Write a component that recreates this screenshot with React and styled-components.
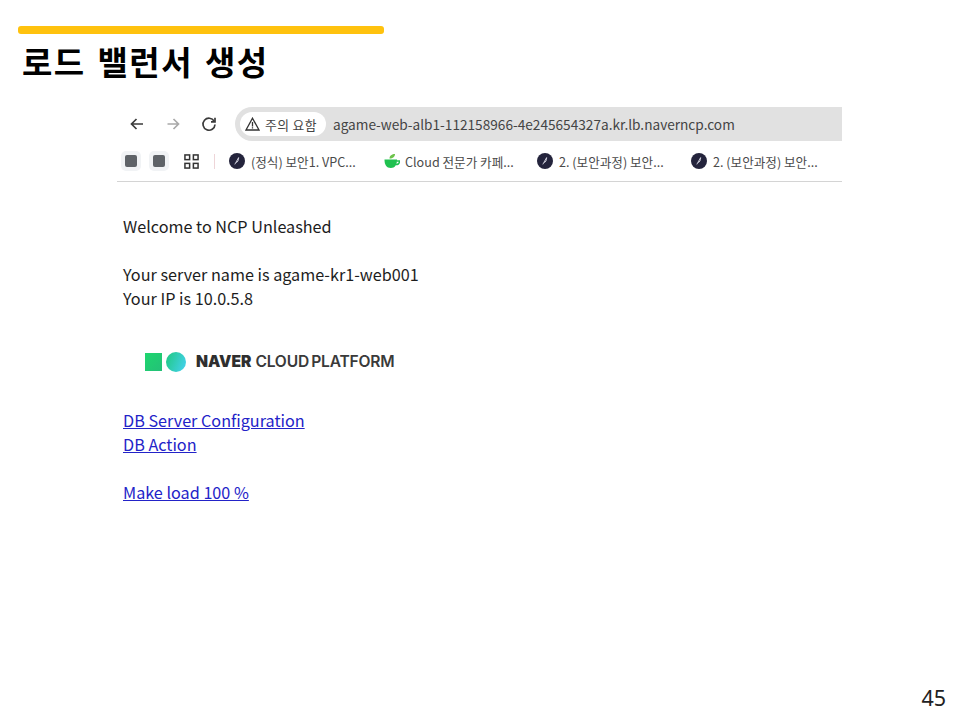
import React from "react";
import styled, { createGlobalStyle } from "styled-components";

const GlobalStyle = createGlobalStyle`
  html, body {
    margin: 0;
    padding: 0;
    background: #fff;
  }
  body {
    font-family: "Noto Sans CJK KR", "Noto Sans", sans-serif;
  }
`;

const Slide = styled.div`
  width: 960px;
  height: 720px;
  box-sizing: border-box;
  padding: 26px 14px 8px 18px;
  display: flex;
  flex-direction: column;
  overflow: hidden;
`;

const AccentBar = styled.div`
  width: 366px;
  height: 8px;
  border-radius: 3px;
  background: #ffc20e;
`;

const Title = styled.h1`
  margin: 3px 0 0 4px;
  font-size: 33px;
  line-height: 48px;
  font-weight: 700;
  letter-spacing: 1.45px;
  word-spacing: 3px;
  color: #000;
`;

const Shot = styled.div`
  width: 725px;
  margin: 22px 0 0 99px;
`;

const Toolbar = styled.div`
  height: 34px;
  display: flex;
  align-items: center;
`;

const NavButtons = styled.div`
  width: 118px;
  padding-left: 11px;
  box-sizing: border-box;
  display: flex;
  align-items: center;
  gap: 18px;
`;

const NavIcon = styled.svg`
  width: 18px;
  height: 18px;
  fill: none;
  stroke: ${(p) => (p.$muted ? "#a9a9a9" : "#3b3b3b")};
  stroke-width: 1.7;
`;

const Omnibox = styled.div`
  flex: 1;
  height: 34px;
  background: #e1e1e1;
  border-radius: 17px 0 0 17px;
  display: flex;
  align-items: center;
  padding-left: 5px;
  font-size: 13.65px;
  color: #333;
`;

const WarningChip = styled.div`
  height: 24px;
  padding: 0 9px 0 5px;
  background: #fff;
  border-radius: 12px;
  display: flex;
  align-items: center;
  gap: 5px;
  font-size: 12.8px;
  letter-spacing: 0.4px;
  color: #444;
`;

const UrlText = styled.span`
  margin-left: 7px;
  color: #444;
`;

const BookmarkBar = styled.div`
  height: 41px;
  box-sizing: border-box;
  padding: 0 0 0 4px;
  display: flex;
  align-items: center;
  border-bottom: 1px solid #d4d4d4;
`;

const SquareButton = styled.div`
  width: 20px;
  height: 20px;
  margin-right: 8px;
  border-radius: 5px;
  background: #f1f3f5;
  display: flex;
  align-items: center;
  justify-content: center;
  &::after {
    content: "";
    width: 12px;
    height: 12px;
    border-radius: 2px;
    background: #5f6368;
  }
`;

const Divider = styled.div`
  width: 1px;
  height: 15px;
  margin: 0 14px 0 15px;
  background: #eed5d8;
`;

const Bookmark = styled.div`
  width: ${(p) => p.$width}px;
  flex: none;
  display: flex;
  align-items: center;
  gap: ${(p) => p.$gap || 6}px;
  font-size: 12.6px;
  color: #4a4a4a;
  white-space: nowrap;
`;

const AppsIcon = styled.svg`
  width: 15px;
  height: 15px;
  margin-left: 7px;
  fill: none;
  stroke: #333;
  stroke-width: 1.6;
`;

const Page = styled.div`
  padding: 32px 0 0 6px;
  font-size: 16.2px;
  line-height: 24px;
  color: #1d1d1d;
`;

const Line = styled.div`
  min-height: 24px;
  margin-top: ${(p) => p.$gap || 0}px;
`;

const PageLink = styled.a`
  color: #2323c8;
  text-decoration: underline;
`;

const LogoRow = styled.div`
  height: 24px;
  margin: 40px 0 34px 22px;
  display: flex;
  align-items: center;
`;

const LogoText = styled.span`
  margin-left: 10px;
  font-family: "Inter", "Noto Sans", sans-serif;
  font-size: 15.6px;
  font-weight: 600;
  color: #3a3a3a;
  letter-spacing: -0.2px;
  word-spacing: -1.5px;
  white-space: nowrap;
  b {
    font-weight: 900;
    margin-right: 4px;
    letter-spacing: 0;
    color: #2e2e2e;
  }
`;

const Footer = styled.div`
  margin-top: auto;
  align-self: flex-end;
  font-family: "Noto Sans", sans-serif;
  font-size: 21.5px;
  line-height: 28px;
  color: #222;
`;

const FeatherBadge = () => (
  <svg width="16" height="16" viewBox="0 0 16 16">
    <circle cx="8" cy="8" r="8" fill="#24243c" />
    <path d="M5.8 11.4 L9.6 4.6 M7.2 9.6 C8.6 9.2 9.8 7 9.6 4.6" fill="none" stroke="#d8d8e4" strokeWidth="0.9" />
  </svg>
);

const CupIcon = () => (
  <svg width="16" height="16" viewBox="0 0 16 16">
    <path d="M0.5 6.5 H13 C13 12 11 15 6.8 15 C2.5 15 0.5 12 0.5 6.5 Z" fill="#1fc14f" />
    <path d="M12.5 8 H15.5 C15.5 10.5 14 11.5 12 11.5" fill="none" stroke="#1fc14f" strokeWidth="1.4" />
    <path d="M5.5 5.5 C5.5 2.5 8 1 11 1 C11 3.5 9 5.5 5.5 5.5 Z" fill="#6cc24a" />
  </svg>
);

const NaverMark = () => (
  <svg width="41" height="20" viewBox="0 0 41 20">
    <defs>
      <linearGradient id="markSquare" x1="0" y1="0" x2="1" y2="1">
        <stop offset="0" stopColor="#1ed66e" />
        <stop offset="1" stopColor="#24c078" />
      </linearGradient>
      <linearGradient id="markCircle" x1="0" y1="0" x2="1" y2="0.4">
        <stop offset="0" stopColor="#1fc97f" />
        <stop offset="1" stopColor="#3fd0e0" />
      </linearGradient>
    </defs>
    <rect x="0" y="1" width="17" height="18" fill="url(#markSquare)" />
    <circle cx="31" cy="10" r="10" fill="url(#markCircle)" />
  </svg>
);

export default function App() {
  return (
    <>
      <GlobalStyle />
      <Slide>
        <AccentBar />
        <Title>로드 밸런서 생성</Title>
        <Shot>
          <Toolbar>
            <NavButtons>
              <NavIcon viewBox="0 0 18 18">
                <path d="M15 9 H3.5 M8.5 4 L3.5 9 L8.5 14" />
              </NavIcon>
              <NavIcon viewBox="0 0 18 18" $muted>
                <path d="M3.5 9 H14.5 M9.5 4 L14.5 9 L9.5 14" />
              </NavIcon>
              <NavIcon viewBox="0 0 18 18">
                <path d="M14.2 6.2 A6 6 0 1 0 15 9.5" />
                <path d="M15 2.8 V6.8 H11" />
              </NavIcon>
            </NavButtons>
            <Omnibox>
              <WarningChip>
                <svg width="15" height="14" viewBox="0 0 15 14" fill="none" stroke="#333" strokeWidth="1.3">
                  <path d="M7.5 1.2 L14 13 H1 Z" />
                  <path d="M7.5 5 V9.4 M7.5 10.2 V11.6" />
                </svg>
                주의 요함
              </WarningChip>
              <UrlText>agame-web-alb1-112158966-4e245654327a.kr.lb.naverncp.com</UrlText>
            </Omnibox>
          </Toolbar>
          <BookmarkBar>
            <SquareButton />
            <SquareButton />
            <AppsIcon viewBox="0 0 16 16">
              <rect x="1" y="1" width="5" height="5" />
              <rect x="10" y="1" width="5" height="5" />
              <rect x="1" y="10" width="5" height="5" />
              <rect x="10" y="10" width="5" height="5" />
            </AppsIcon>
            <Divider />
            <Bookmark $width={155}>
              <FeatherBadge />
              (정식) 보안1. VPC...
            </Bookmark>
            <Bookmark $width={153} $gap={5}>
              <CupIcon />
              Cloud 전문가 카페...
            </Bookmark>
            <Bookmark $width={154}>
              <FeatherBadge />
              2. (보안과정) 보안...
            </Bookmark>
            <Bookmark $width={140}>
              <FeatherBadge />
              2. (보안과정) 보안...
            </Bookmark>
          </BookmarkBar>
          <Page>
            <Line>Welcome to NCP Unleashed</Line>
            <Line $gap={24}>Your server name is agame-kr1-web001</Line>
            <Line>Your IP is 10.0.5.8</Line>
            <LogoRow>
              <NaverMark />
              <LogoText>
                <b>NAVER</b>CLOUD PLATFORM
              </LogoText>
            </LogoRow>
            <Line>
              <PageLink href="#">DB Server Configuration</PageLink>
            </Line>
            <Line>
              <PageLink href="#">DB Action</PageLink>
            </Line>
            <Line $gap={24}>
              <PageLink href="#">Make load 100 %</PageLink>
            </Line>
          </Page>
        </Shot>
        <Footer>45</Footer>
      </Slide>
    </>
  );
}
